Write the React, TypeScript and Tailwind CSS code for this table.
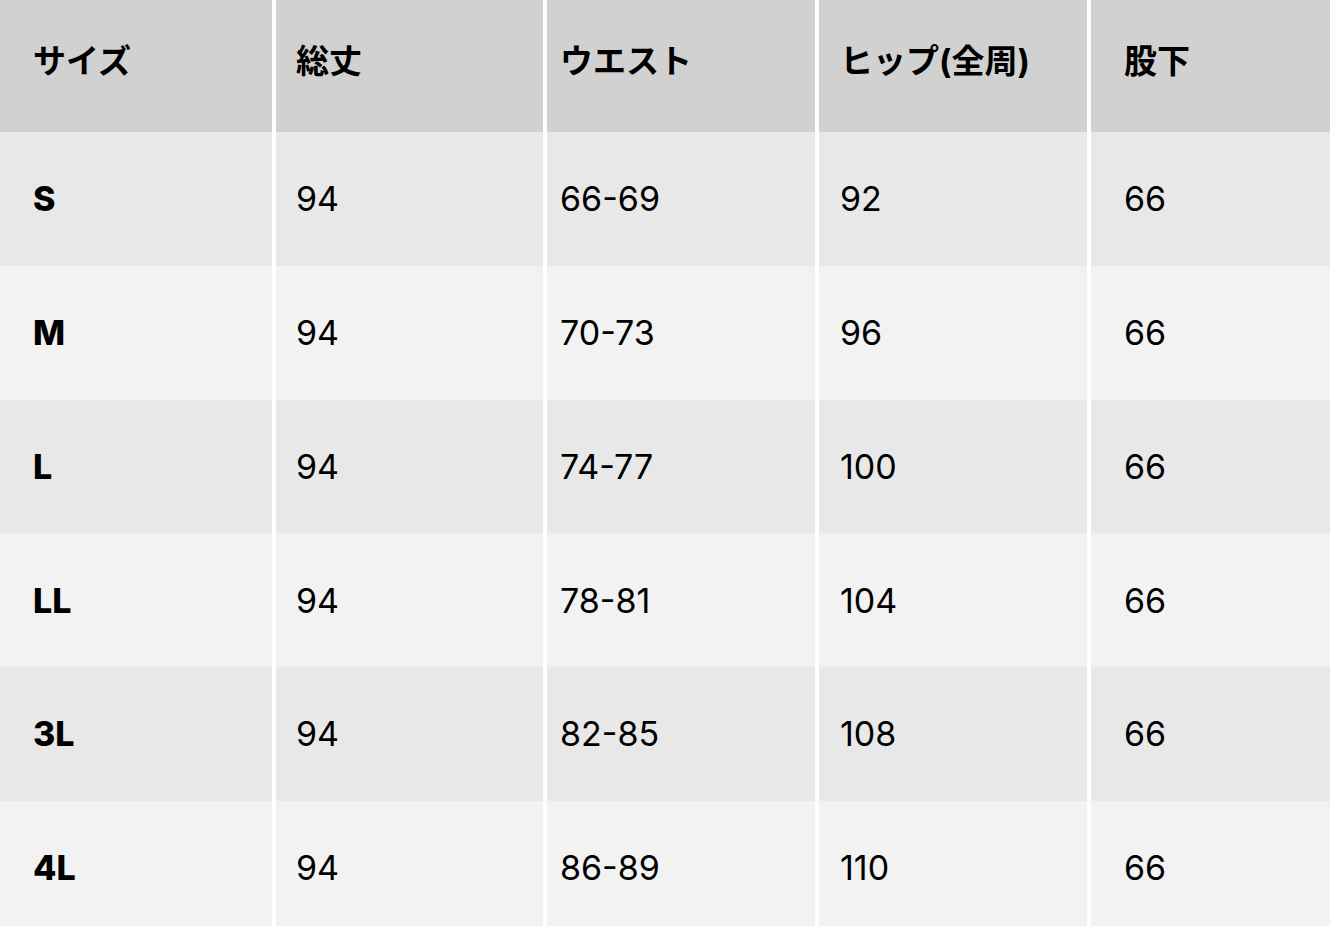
const headers = ["サイズ", "総丈", "ウエスト", "ヒップ(全周)", "股下"];

const rows = [
  ["S", "94", "66-69", "92", "66"],
  ["M", "94", "70-73", "96", "66"],
  ["L", "94", "74-77", "100", "66"],
  ["LL", "94", "78-81", "104", "66"],
  ["3L", "94", "82-85", "108", "66"],
  ["4L", "94", "86-89", "110", "66"],
];

const pad = ["pl-[33px]", "pl-[20px]", "pl-[13px]", "pl-[21px]", "pl-[33px]"];

export default function App() {
  return (
    <div
      className="w-[1330px] h-[926px] overflow-hidden bg-white text-black"
      style={{ fontFamily: 'Inter, "Noto Sans CJK JP", sans-serif' }}
    >
      <div className="grid grid-cols-[272px_267px_268px_268px_1fr] gap-x-[4px]">
        {headers.map((h, i) => (
          <div
            key={h}
            className={`h-[132px] bg-[#d1d1d1] flex items-center pb-[8px] text-[33px] font-bold ${pad[i]}`}
          >
            {h}
          </div>
        ))}
        {rows.map((r, ri) =>
          r.map((c, ci) => (
            <div
              key={ri + "-" + ci}
              className={`h-[133.75px] flex items-center text-[34px] ${pad[ci]} ${
                ri % 2 === 0 ? "bg-[#e8e8e8]" : "bg-[#f2f2f2]"
              } ${ci === 0 ? "font-extrabold" : "font-normal"}`}
            >
              {c}
            </div>
          ))
        )}
      </div>
    </div>
  );
}
